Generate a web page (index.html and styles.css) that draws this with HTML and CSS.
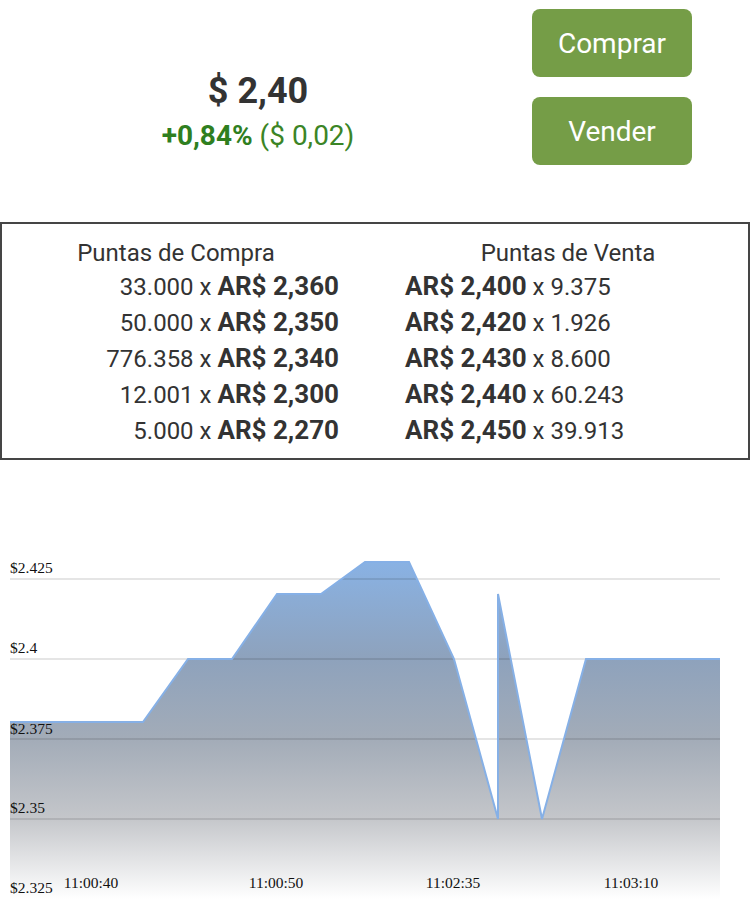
FILE: index.html
```html
<!DOCTYPE html>
<html lang="es">
<head>
  <meta charset="UTF-8" />
  <meta name="viewport" content="width=device-width, initial-scale=1" />
  <title>Cotización</title>
  <link rel="stylesheet" href="styles.css">
</head>
<body>

  <div class="top">
    <div class="quote">
      <div class="price">$ 2,40</div>
      <div class="change"><strong>+0,84%</strong> ($ 0,02)</div>
    </div>
    <div class="actions">
      <button class="btn">Comprar</button>
      <button class="btn">Vender</button>
    </div>
  </div>

  <div class="book">
    <div class="side side-buy">
      <div class="side-title">Puntas de Compra</div>
      <div class="row">33.000 x <b>AR$ 2,360</b></div>
      <div class="row">50.000 x <b>AR$ 2,350</b></div>
      <div class="row">776.358 x <b>AR$ 2,340</b></div>
      <div class="row">12.001 x <b>AR$ 2,300</b></div>
      <div class="row">5.000 x <b>AR$ 2,270</b></div>
    </div>
    <div class="side side-sell">
      <div class="side-title">Puntas de Venta</div>
      <div class="row"><b>AR$ 2,400</b> x 9.375</div>
      <div class="row"><b>AR$ 2,420</b> x 1.926</div>
      <div class="row"><b>AR$ 2,430</b> x 8.600</div>
      <div class="row"><b>AR$ 2,440</b> x 60.243</div>
      <div class="row"><b>AR$ 2,450</b> x 39.913</div>
    </div>
  </div>

  <div class="chart">
    <svg width="750" height="452" viewBox="0 460 750 452">
      <defs>
        <linearGradient id="area" x1="0" y1="561" x2="0" y2="899" gradientUnits="userSpaceOnUse">
          <stop offset="0" stop-color="#89b2e4" />
          <stop offset="0.29" stop-color="#8ea2bc" />
          <stop offset="0.53" stop-color="#a3acb8" />
          <stop offset="0.76" stop-color="#c4c6ca" />
          <stop offset="1" stop-color="#ffffff" />
        </linearGradient>
      </defs>

      <polygon class="area" points="10,722 143,722 188,659 232,659 277,594 321,594 365,562 409,562 454,659 498,819 498,594 542,819 586,659 720,659 720,899 10,899" />

      <!-- grid -->
      <line class="grid" x1="10" y1="579" x2="720" y2="579" />
      <line class="grid" x1="10" y1="659" x2="720" y2="659" />
      <line class="grid" x1="10" y1="739" x2="720" y2="739" />
      <line class="grid" x1="10" y1="819" x2="720" y2="819" />

      <polyline class="line" points="10,722 143,722 188,659 232,659 277,594 321,594 365,562 409,562 454,659 498,819 498,594 542,819 586,659 720,659" />

      <text class="axis" x="10" y="573">$2.425</text>
      <text class="axis" x="10" y="653">$2.4</text>
      <text class="axis" x="10" y="734">$2.375</text>
      <text class="axis" x="10" y="813">$2.35</text>
      <text class="axis" x="10" y="893">$2.325</text>

      <text class="axis time" x="91" y="888">11:00:40</text>
      <text class="axis time" x="276" y="888">11:00:50</text>
      <text class="axis time" x="453" y="888">11:02:35</text>
      <text class="axis time" x="631" y="888">11:03:10</text>
    </svg>
  </div>

</body>
</html>
```

FILE: styles.css
```css
html, body {
  margin: 0;
  padding: 0;
  background: #ffffff;
  color: #333333;
  font-family: Roboto, "Noto Sans", sans-serif;
}

/* 1. Price + buttons */
.top {
  display: flex;
  height: 165px;
}
.quote {
  width: 516px;
  padding-top: 71px;
  text-align: center;
}
.price {
  font-size: 36px;
  line-height: 40px;
  font-weight: bold;
}
.change {
  margin-top: 8px;
  font-size: 28px;
  line-height: 34px;
  color: #3b8526;
}
.change strong { color: #2f7f1f; }

.actions {
  display: flex;
  flex-direction: column;
  gap: 20px;
  padding-top: 9px;
  margin-left: 16px;
}
.btn {
  width: 160px;
  height: 68px;
  border: none;
  border-radius: 8px;
  background: #759d47;
  color: #ffffff;
  font-family: Roboto, sans-serif;
  font-size: 28px;
  padding: 0;
  cursor: pointer;
}

/* 2. Order book */
.book {
  display: flex;
  margin-top: 57px;
  height: 238px;
  box-sizing: border-box;
  border: 2px solid #454545;
  padding-top: 13px;
  font-size: 24px;
}
.side-title { line-height: 32px; }
.row { line-height: 36px; }
.row b {
  font-weight: bold;
  font-size: 26px;
  line-height: 1;
}

.side-buy {
  width: 348px;
}
.side-buy .side-title { text-align: center; }
.side-buy .row {
  text-align: right;
  padding-right: 11px;
}
.side-sell {
  flex: 1;
}
.side-sell .side-title {
  text-align: center;
  padding-left: 38px;
}
.side-sell .row {
  padding-left: 55px;
}

/* 3. Chart */
.chart svg { display: block; }
.chart .area { fill: url(#area); }
.chart .grid {
  stroke: rgba(0, 0, 0, 0.1);
  stroke-width: 2;
}
.chart .line {
  fill: none;
  stroke: #86b0e6;
  stroke-width: 2;
}
.chart .axis {
  font-family: "Liberation Serif", serif;
  font-size: 15.5px;
  fill: #111111;
}
.chart .time { text-anchor: middle; }
```
